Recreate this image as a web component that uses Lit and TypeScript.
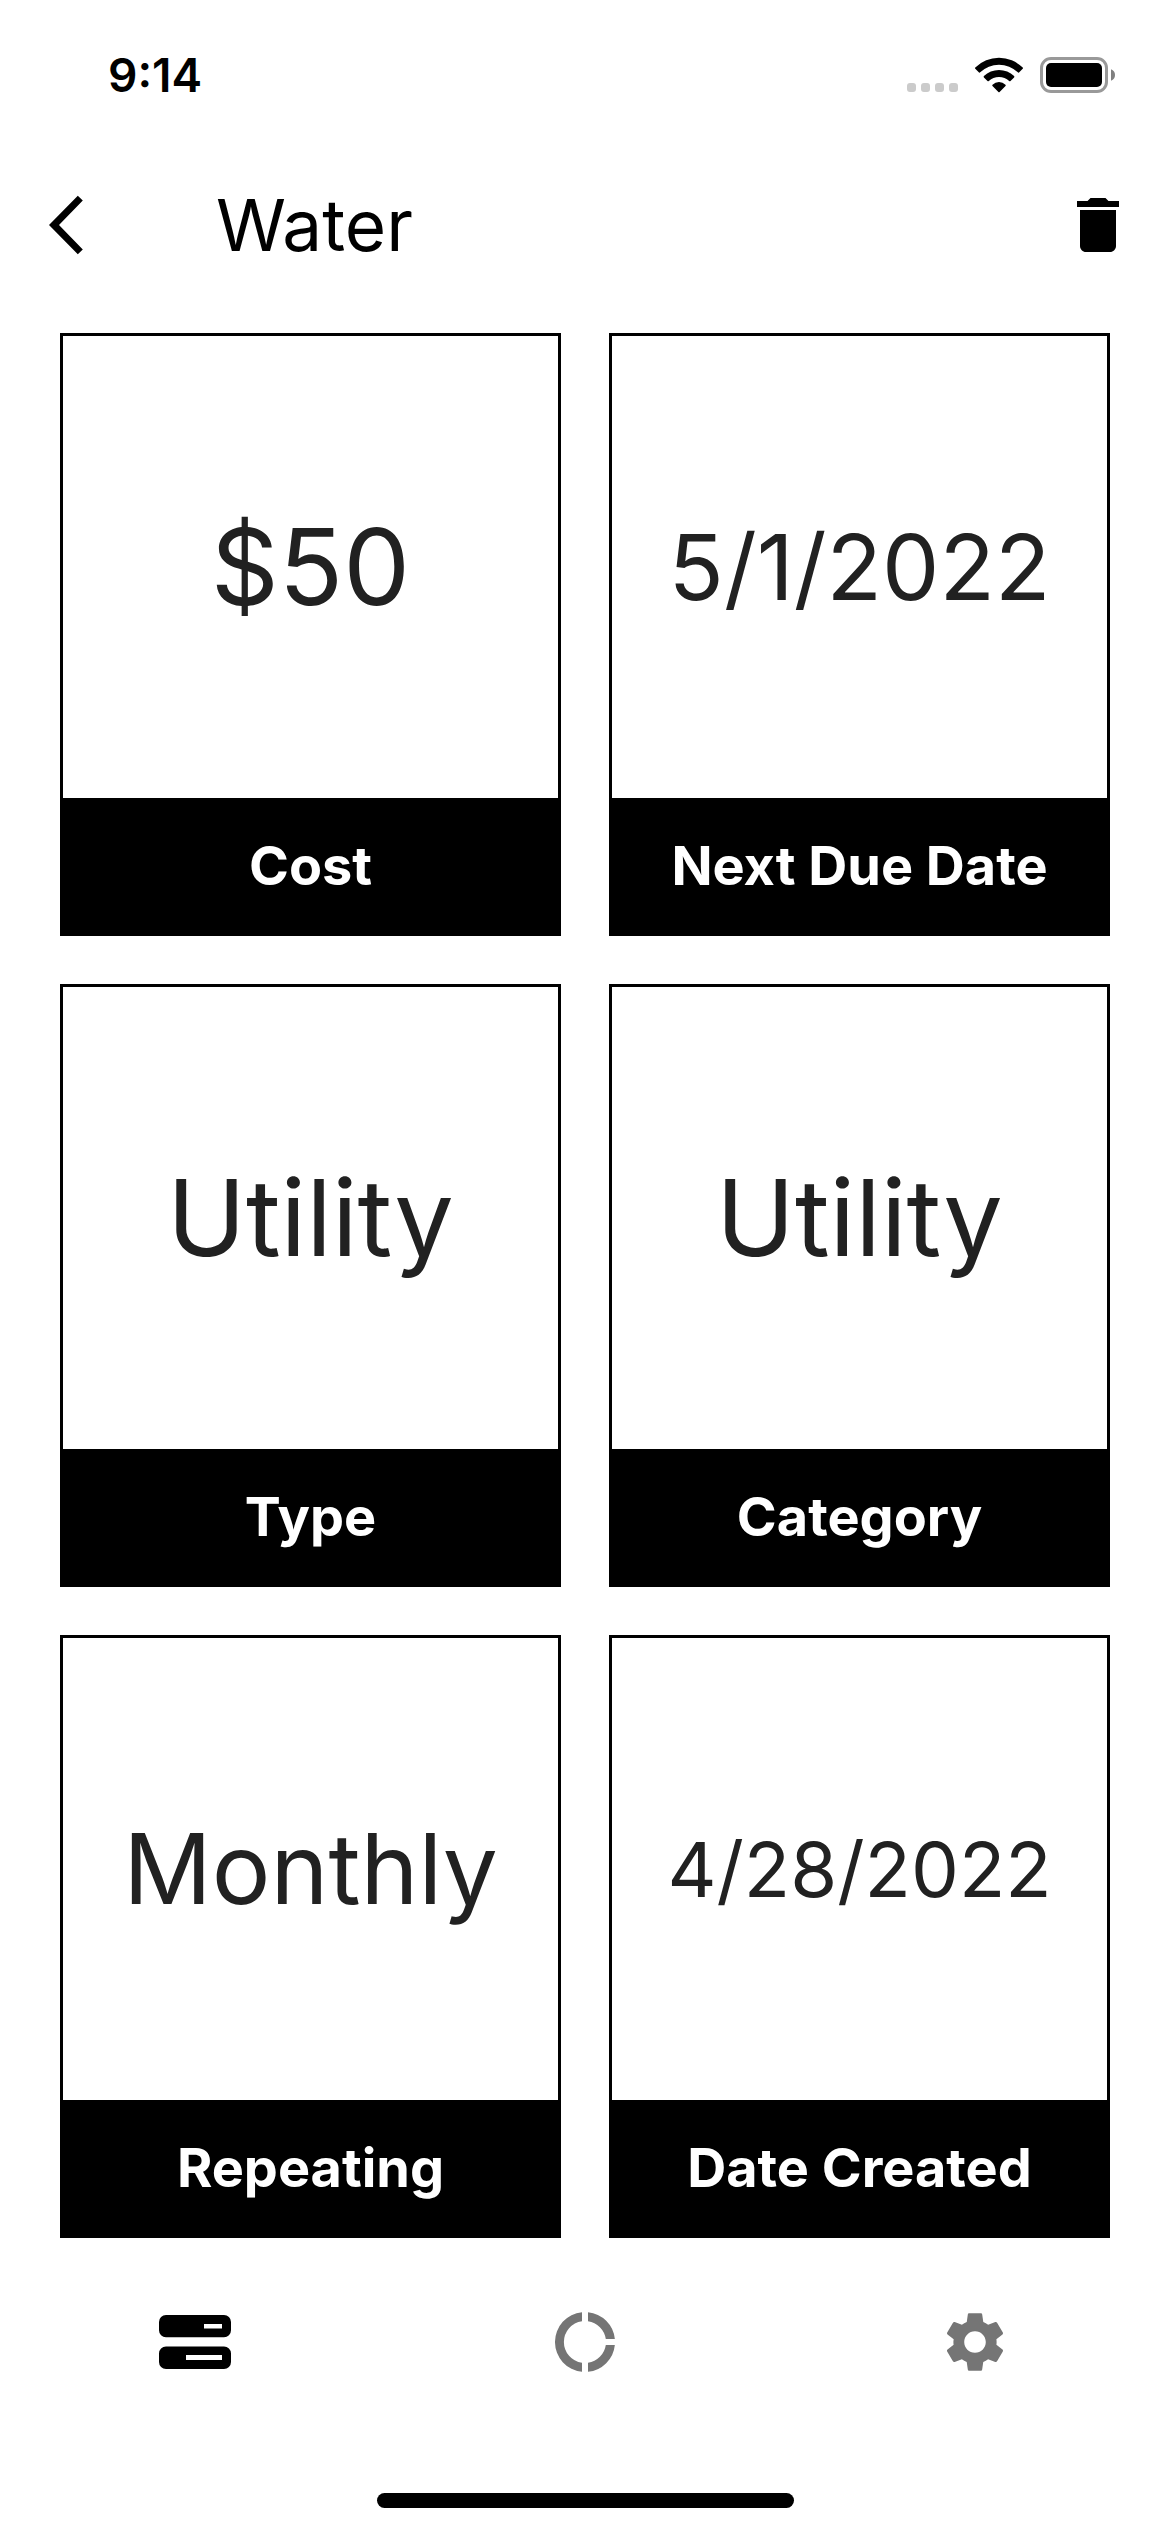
import { LitElement, html, css, svg } from "lit";
import { customElement, property } from "lit/decorators.js";

type ValueSize = "s" | "m" | "l" | "xl";

interface BillDetail {
  value: string;
  label: string;
  size: ValueSize;
}

const DETAILS: BillDetail[] = [
  { value: "$50", label: "Cost", size: "xl" },
  { value: "5/1/2022", label: "Next Due Date", size: "m" },
  { value: "Utility", label: "Type", size: "xl" },
  { value: "Utility", label: "Category", size: "xl" },
  { value: "Monthly", label: "Repeating", size: "l" },
  { value: "4/28/2022", label: "Date Created", size: "s" },
];

const billsIcon = svg`
  <svg width="72" height="54" viewBox="0 0 72 54" fill="currentColor" aria-hidden="true">
    <path fill-rule="evenodd" d="M7 0H65A7 7 0 0 1 72 7V15.3A7 7 0 0 1 65 22.3H7A7 7 0 0 1 0 15.3V7A7 7 0 0 1 7 0ZM45 9V13.6H63V9Z" />
    <path fill-rule="evenodd" d="M7 31.4H65A7 7 0 0 1 72 38.4V47A7 7 0 0 1 65 54H7A7 7 0 0 1 0 47V38.4A7 7 0 0 1 7 31.4ZM27 40V45H63V40Z" />
  </svg>`;

const chartIcon = svg`
  <svg width="60" height="60" viewBox="-30 -30 60 60" fill="currentColor" aria-hidden="true">
    <path d="M-3 -29.85A30 30 0 0 0 -3 29.85V20.8A21 21 0 0 1 -3 -20.8Z" />
    <path d="M3 -29.85A30 30 0 0 1 29.85 -3H20.8A21 21 0 0 0 3 -20.8Z" />
    <path d="M29.85 3A30 30 0 0 1 3 29.85V20.8A21 21 0 0 0 20.8 3Z" />
  </svg>`;

const settingsIcon = svg`
  <svg width="72" height="72" viewBox="0 0 24 24" fill="currentColor" aria-hidden="true">
    <path d="M19.14,12.94c0.04-0.3,0.06-0.61,0.06-0.94c0-0.32-0.02-0.64-0.07-0.94l2.03-1.58c0.18-0.14,0.23-0.41,0.12-0.61l-1.92-3.32c-0.12-0.22-0.37-0.29-0.59-0.22l-2.39,0.96c-0.5-0.38-1.03-0.7-1.62-0.94L14.4,2.81c-0.04-0.24-0.24-0.41-0.48-0.41h-3.84c-0.24,0-0.43,0.17-0.47,0.41L9.25,5.35C8.66,5.59,8.12,5.92,7.63,6.29L5.24,5.33c-0.22-0.08-0.47,0-0.59,0.22L2.74,8.87C2.62,9.08,2.66,9.34,2.86,9.48l2.03,1.58C4.84,11.36,4.8,11.69,4.8,12s0.02,0.64,0.07,0.94l-2.03,1.58c-0.18,0.14-0.23,0.41-0.12,0.61l1.92,3.32c0.12,0.22,0.37,0.29,0.59,0.22l2.39-0.96c0.5,0.38,1.03,0.7,1.62,0.94l0.36,2.54c0.05,0.24,0.24,0.41,0.48,0.41h3.84c0.24,0,0.44-0.17,0.47-0.41l0.36-2.54c0.59-0.24,1.13-0.56,1.62-0.94l2.39,0.96c0.22,0.08,0.47,0,0.59-0.22l1.92-3.32c0.12-0.22,0.07-0.47-0.12-0.61L19.14,12.94z M12,15.6c-1.98,0-3.6-1.62-3.6-3.6s1.62-3.6,3.6-3.6s3.6,1.62,3.6,3.6S13.98,15.6,12,15.6z" />
  </svg>`;

@customElement("status-bar")
export class StatusBar extends LitElement {
  static styles = css`
    :host {
      display: block;
    }
    .bar {
      display: flex;
      align-items: center;
      justify-content: space-between;
      box-sizing: border-box;
      height: 141px;
      padding: 8px 54px 0 108px;
    }
    .time {
      font-size: 46px;
      line-height: 54px;
      font-weight: 600;
    }
    .indicators {
      display: flex;
      align-items: center;
      gap: 17px;
    }
    .indicators svg {
      display: block;
    }
  `;

  render() {
    return html`
      <div class="bar">
        <time class="time">9:14</time>
        <div class="indicators">
          <svg width="51" height="36" viewBox="0 0 51 36" fill="#cbcbcb" aria-hidden="true">
            <rect x="0" y="26" width="9" height="9" rx="3" />
            <rect x="14" y="26" width="9" height="9" rx="3" />
            <rect x="28" y="26" width="9" height="9" rx="3" />
            <rect x="42" y="26" width="9" height="9" rx="3" />
          </svg>
          <svg width="48" height="36" viewBox="0 0 48 36" aria-hidden="true">
            <path d="M0.3 10.6A33.5 33.5 0 0 1 47.7 10.6Q48.3 11.2 47.7 11.8L44 15.4Q43.5 15.9 42.8 15.3A27 27 0 0 0 5.2 15.3Q4.5 15.9 4 15.4L0.3 11.8Q-0.3 11.2 0.3 10.6Z" />
            <path d="M8.9 19.1A21.5 21.5 0 0 1 39.1 19.1Q39.7 19.8 39.1 20.4L35.5 24Q34.8 24.5 34.2 24A15 15 0 0 0 13.8 24Q13.2 24.5 12.5 24L8.9 20.4Q8.3 19.8 8.9 19.1Z" />
            <path d="M17.5 27.7A9.4 9.4 0 0 1 30.5 27.7Q31.1 28.4 30.5 29L24.6 35Q24 35.6 23.4 35L17.5 29Q16.9 28.4 17.5 27.7Z" />
          </svg>
          <svg width="76" height="36" viewBox="0 0 76 36" aria-hidden="true">
            <rect x="1.5" y="1.5" width="65" height="33" rx="9.5" fill="none" stroke="#999999" stroke-width="3" />
            <rect x="6" y="6" width="56" height="24" rx="5" />
            <path d="M71 12.2A6.2 6.2 0 0 1 71 23.8Z" fill="#808080" />
          </svg>
        </div>
      </div>
    `;
  }
}

@customElement("bill-card")
export class BillCard extends LitElement {
  @property() value = "";
  @property() label = "";
  @property() size: ValueSize = "xl";

  static styles = css`
    :host {
      display: block;
    }
    .card {
      margin: 0;
      border: 3px solid #000;
      background: #fff;
    }
    .value {
      display: flex;
      align-items: center;
      justify-content: center;
      margin: 0;
      aspect-ratio: 15 / 14;
      color: #212121;
      white-space: nowrap;
      line-height: 1;
    }
    .xl {
      font-size: 106px;
    }
    .l {
      font-size: 98px;
    }
    .m {
      font-size: 91px;
    }
    .s {
      font-size: 76px;
    }
    .label {
      padding: 36px 24px;
      background: #000;
      color: #fff;
      font-size: 54px;
      font-weight: 700;
      line-height: 63px;
      text-align: center;
      white-space: nowrap;
    }
  `;

  render() {
    return html`
      <figure class="card">
        <p class="value ${this.size}">${this.value}</p>
        <figcaption class="label">${this.label}</figcaption>
      </figure>
    `;
  }
}

@customElement("app-root")
export class AppRoot extends LitElement {
  static styles = css`
    :host {
      display: flex;
      flex-direction: column;
      min-height: 100vh;
      background: #fff;
      color: #000;
      font-family: Inter, "Liberation Sans", sans-serif;
    }
    .app-bar {
      display: flex;
      align-items: center;
      height: 168px;
      padding: 0 36px 0 48px;
    }
    .icon-button {
      display: flex;
      align-items: center;
      padding: 0;
      border: 0;
      background: none;
      color: inherit;
      cursor: pointer;
    }
    .back {
      width: 168px;
      height: 168px;
    }
    .title {
      flex: 1;
      margin: 0;
      font-size: 71px;
      line-height: 84px;
      font-weight: 400;
    }
    .details {
      display: grid;
      grid-template-columns: 1fr 1fr;
      gap: 48px;
      padding: 24px 60px;
    }
    .tabs {
      display: grid;
      grid-template-columns: repeat(3, 1fr);
      height: 160px;
    }
    .tab {
      display: flex;
      align-items: center;
      justify-content: center;
      color: #757575;
    }
    .tab[aria-current] {
      color: #000;
    }
    .home {
      display: flex;
      justify-content: center;
      margin-top: auto;
      padding-bottom: 24px;
    }
    .home-line {
      width: 417px;
      height: 15px;
      border-radius: 8px;
      background: #000;
    }
  `;

  render() {
    return html`
      <status-bar></status-bar>
      <header class="app-bar">
        <button class="icon-button back" aria-label="Back">
          <svg width="36" height="60" viewBox="0 0 36 60" fill="currentColor" aria-hidden="true">
            <path d="M1 30L29.8 0.7L34.8 5.6L11 30L34.8 54.4L29.8 59.3Z" />
          </svg>
        </button>
        <h1 class="title">Water</h1>
        <button class="icon-button" aria-label="Delete">
          <svg width="72" height="72" viewBox="0 0 24 24" fill="currentColor" aria-hidden="true">
            <path d="M6 19c0 1.1.9 2 2 2h8c1.1 0 2-.9 2-2V7H6v12zM19 4h-3.5l-1-1h-5l-1 1H5v2h14V4z" />
          </svg>
        </button>
      </header>
      <main class="details">
        ${DETAILS.map(
          (d) => html`<bill-card .value=${d.value} .label=${d.label} .size=${d.size}></bill-card>`,
        )}
      </main>
      <nav class="tabs" aria-label="Main">
        <a class="tab" href="#bills" aria-label="Bills" aria-current="page">${billsIcon}</a>
        <a class="tab" href="#summary" aria-label="Summary">${chartIcon}</a>
        <a class="tab" href="#settings" aria-label="Settings">${settingsIcon}</a>
      </nav>
      <div class="home"><div class="home-line"></div></div>
    `;
  }
}
